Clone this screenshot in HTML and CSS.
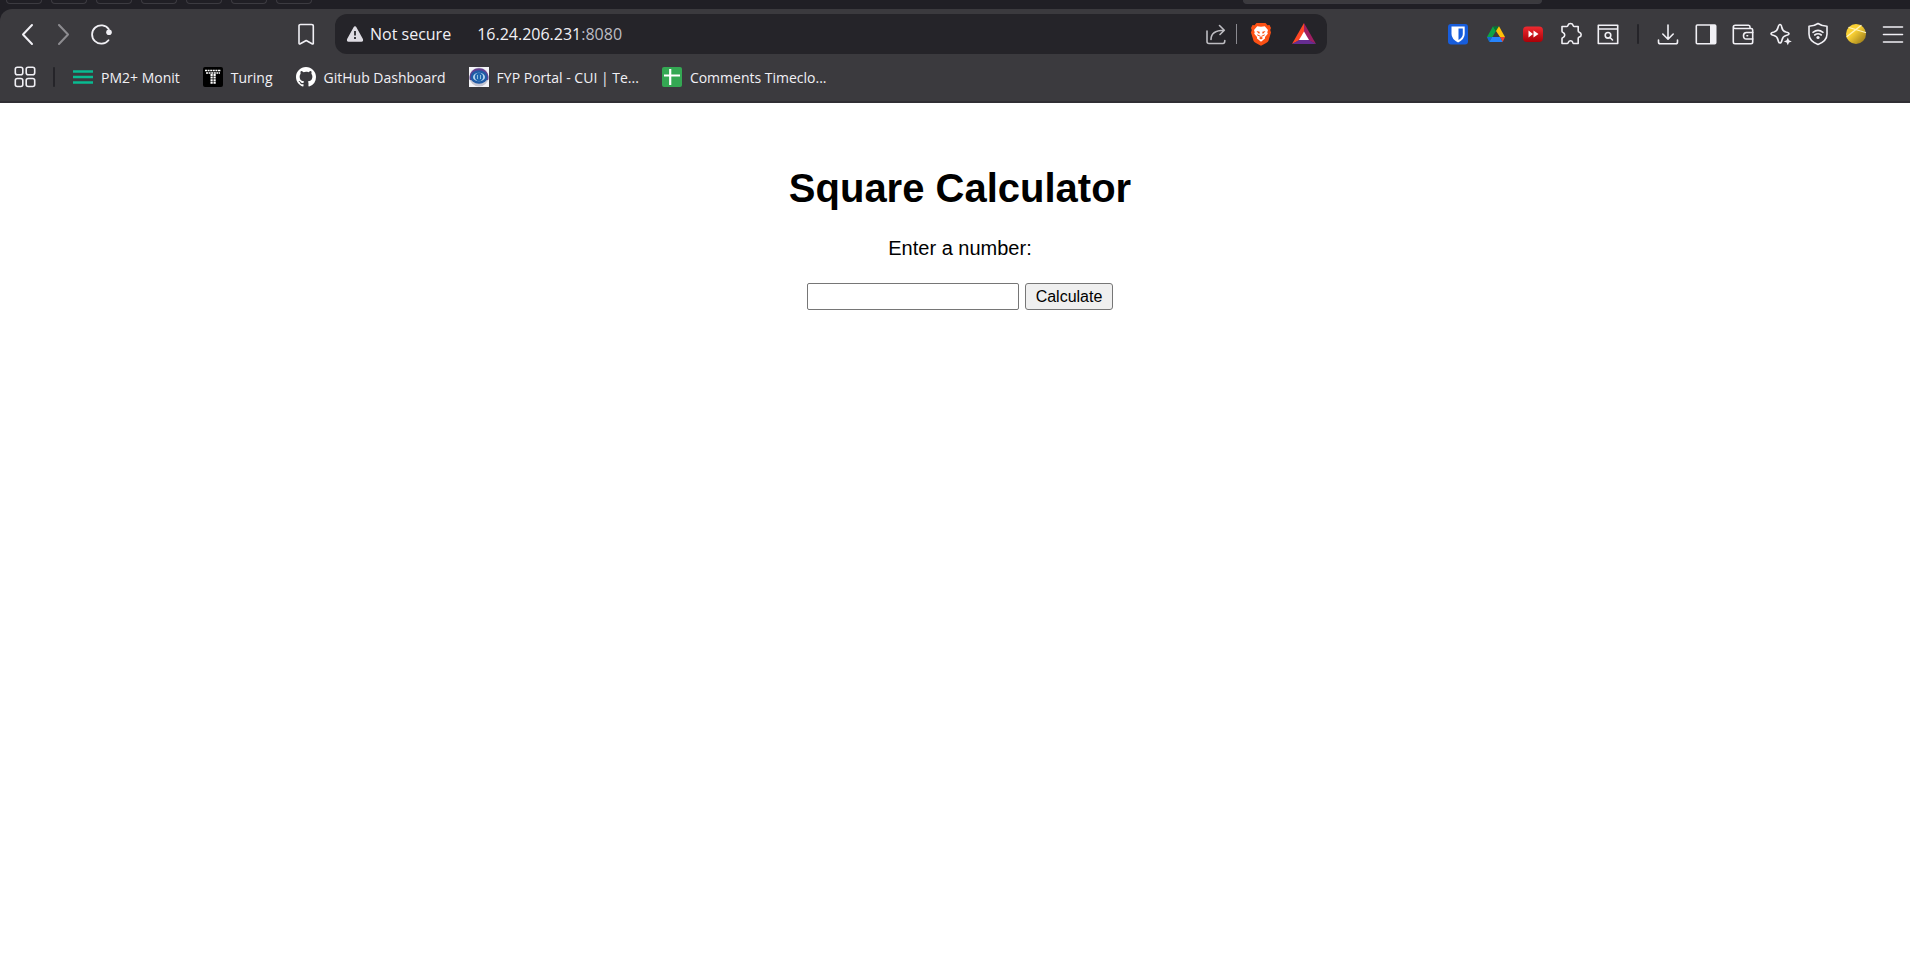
FILE: index.html
```html
<!DOCTYPE html>
<html lang="en">
<head>
<meta charset="utf-8">
<title>Square Calculator</title>
<link rel="stylesheet" href="styles.css">
</head>
<body>
<header class="browser">
  <div class="tabstrip">
    <span class="tab"></span><span class="tab"></span><span class="tab"></span><span class="tab"></span><span class="tab"></span><span class="tab"></span><span class="tab"></span>
    <span class="tab tab-active"></span>
  </div>
  <div class="chrome">
    <div class="toolbar">
      <div class="nav">
        <button class="icon-btn" aria-label="Back"><svg class="icon" viewBox="0 0 24 24"><path d="M17 3 8 12.500 17 22" stroke-width="2"/></svg></button>
        <button class="icon-btn dim" aria-label="Forward"><svg class="icon" viewBox="0 0 24 24"><path d="M7 3 16 12.500 7 22" stroke-width="2"/></svg></button>
        <button class="icon-btn" aria-label="Reload"><svg class="icon" viewBox="0 0 24 24"><path d="M19.500 18.200A9.200 9.200 0 1 1 19.800 7.200" stroke-width="1.800"/><circle cx="20" cy="10.300" r="2.800" class="solid"/></svg></button>
      </div>
      <button class="icon-btn" aria-label="Bookmark this page"><svg class="icon" viewBox="0 0 24 24"><path d="M5 3.500Q5 2.500 6.500 2.500H17.500Q19.300 2.500 19.300 4V21.500Q19 22.300 18 21.800L12.200 18.500 6.300 21.800Q5 22.300 5 21Z"/></svg></button>
      <div class="address">
        <button class="security"><svg class="warn" viewBox="0 0 18 18"><path d="M9 1.200Q9.900 1.200 10.400 2.200L16.900 14Q17.700 16.500 15.500 16.700H2.500Q.3 16.500 1.100 14L7.600 2.200Q8.100 1.200 9 1.200Z" fill="#dedce3"/><path d="M9 6v4.600M9 12v2" stroke="#29282d" stroke-width="1.800" stroke-linecap="butt"/></svg>Not secure</button>
        <span class="url">16.24.206.231<span class="port">:8080</span></span>
        <button class="icon-btn share" aria-label="Share"><svg class="icon" viewBox="0 0 24 24"><path d="M3 9v10.500Q3 21.500 5 21.500H19Q20.800 21.500 20.800 18.500M7 17.500C7 11.500 11 8.200 20 8.200M15.500 3.500 20.300 8.200 16 12.500"/></svg></button>
        <span class="address-rule"></span>
        <button class="icon-btn shields" aria-label="Brave Shields"><svg class="icon" viewBox="0 0 24 24"><path d="M7.500 1H16.500L18.500 3.200 20.500 3 22 6 21.200 8 22 10.500 19.400 19Q18.500 20.800 12 23.800 5.500 20.800 4.600 19L2 10.500 2.800 8 2 6 3.500 3 5.500 3.200Z" fill="#fb5014"/><path d="M12 4.800 15.800 4.300 19 8 18.300 10.300 18.800 11.800 16 15 16 16.500 12 19.700 8 16.500 8 15 5.200 11.800 5.700 10.300 5 8 8.200 4.300Z" fill="#fff"/><path d="M7.500 9 10.700 9.800 10.500 11.800 9.300 11.300ZM16.500 9 13.300 9.800 13.500 11.800 14.700 11.300ZM10 16 12 14.800 14 16 12 17.400Z" fill="#fb5014"/><path d="M8.600 13 11.200 14.200M15.400 13 12.800 14.200" stroke="#fb5014" stroke-width="1"/></svg></button>
        <button class="icon-btn rewards" aria-label="Brave Rewards"><svg class="icon" viewBox="0 0 24 24"><path d="M12 1 0 22 8 18 12 11Z" fill="#ff4724"/><path d="M12 1 24 22 16 18 12 11Z" fill="#9e1f63"/><path d="M0 22H24L16 17.500H8Z" fill="#662d91"/><path d="M12 9.500 17 18H7Z" fill="#fff"/></svg></button>
      </div>
      <div class="extensions">
        <button class="icon-btn" aria-label="Bitwarden"><svg class="icon" viewBox="0 0 24 24"><rect x="2" y="2" width="20" height="20.500" rx="3" fill="#175ddc"/><path d="M5.500 4.500H18.700V12Q18.700 17 12.100 20.500 5.500 17 5.500 12Z" fill="#fff"/><path d="M12.500 6.500H16.800V12Q16.700 15.500 12.500 18Z" fill="#175ddc"/></svg></button>
        <button class="icon-btn" aria-label="Google Drive"><svg class="icon" viewBox="0 0 24 24"><path d="M9 4.300 3 15 5.500 19.800 12 9Z" fill="#0da345"/><path d="M9 4.300H15L12 9.500Z" fill="#087334"/><path d="M15 4.300 21 15H16L12 9Z" fill="#ffc107"/><path d="M8 15 5.200 20H18.800L16 15Z" fill="#2684fc"/><path d="M3 15H8L5.200 20Z" fill="#1967d2"/><path d="M16 15H21L18.700 20Z" fill="#ea4335"/></svg></button>
        <button class="icon-btn" aria-label="Video speed"><svg class="icon" viewBox="0 0 24 24"><defs><linearGradient id="red" x2="0" y2="1"><stop stop-color="#ef2a30"/><stop offset="1" stop-color="#aa0007"/></linearGradient></defs><rect x="2" y="4.500" width="20" height="15.500" rx="4" fill="url(#red)"/><path d="M7.500 8.500 12 12 7.500 15.500ZM12.500 8.500 17.500 12 12.500 15.500Z" fill="#fff"/></svg></button>
        <button class="icon-btn" aria-label="Extensions"><svg class="icon" viewBox="0 0 24 24"><path d="M3 4.500H8C8.500 4.500 8.800 4 9 3.300 9.700.8 13.300.8 14 3.300 14.200 4 14.500 4.500 15 4.500H19.200V9C19.200 9.700 19.700 10 20.300 10.200 22.800 11 22.800 14.300 20.300 15.100 19.700 15.300 19.200 15.700 19.200 16.400V21.500H14.500C14 21.500 14 21 13.700 20.300 13 18.300 10.200 18.300 9.400 20.300 9.200 21 9 21.500 8.400 21.500H3V16.600C3 16 3.300 15.600 4 15.400 6.300 14.600 6.300 11.300 4 10.500 3.300 10.300 3 9.800 3 9.200Z"/></svg></button>
        <button class="icon-btn" aria-label="Search tabs"><svg class="icon" viewBox="0 0 24 24"><path d="M2.300 3.300H21.700V21.500H2.300ZM2.300 7H21.700"/><circle cx="12" cy="13.300" r="2.800"/><path d="m14 15.500 2.500 2.500"/></svg></button>
      </div>
      <span class="rule"></span>
      <div class="tools">
        <button class="icon-btn" aria-label="Downloads"><svg class="icon" viewBox="0 0 24 24"><path d="M12 3V17M6.800 12 12 17.200 17.200 12M2.500 18V20Q2.500 21.800 4.300 21.800H19.700Q21.500 21.800 21.500 20V18"/></svg></button>
        <button class="icon-btn" aria-label="Sidebar"><svg class="icon" viewBox="0 0 24 24"><rect x="2.300" y="3" width="19.400" height="18.800" rx="1"/><path d="M16 3H21.500V21.800H16Z" class="solid"/></svg></button>
        <button class="icon-btn" aria-label="Wallet"><svg class="icon" viewBox="0 0 24 24"><path d="M19 6V5Q19 3.300 17.500 3.300H4.300Q2.300 3.300 2.300 5V20Q2.300 21.700 4 21.700H20Q21.700 21.700 21.700 20V8Q21.700 6.500 20 6.500H4Q2.500 6.500 2.300 5"/><path d="M21.700 10.500H15.500Q12.500 10.500 12.500 13.800T15.500 17H21.700M16 13.800h.6"/></svg></button>
        <button class="icon-btn" aria-label="Leo AI"><svg class="icon" viewBox="0 0 24 24"><path d="M11 2.500Q12.400 2.500 12.800 5.500 13.400 9 17 10 20 10.600 20 11.800T17 13.500Q13.700 14.300 13 18 12.400 21 11 21T9 18Q8.300 14.300 5 13.500 2 12.800 2 11.800T5 10Q8.300 9 9 5.500 9.700 2.500 11 2.500Z"/><path d="M18.800 15.500 20 18.200 22.800 19.400 20 20.600 18.800 23.300 17.600 20.600 14.800 19.400 17.600 18.200Z" class="solid"/></svg></button>
        <button class="icon-btn" aria-label="VPN"><svg class="icon" viewBox="0 0 24 24"><path d="M12 1.500Q16 4.200 21 4.200V12Q21 19 12 22.500 3 19 3 12V4.200Q8 4.200 12 1.500Z"/><path d="M7 10.300Q12 6.500 17 10.300M8.700 13Q12 10.500 15.300 13"/><circle cx="12" cy="15.500" r="1.600" class="solid"/></svg></button>
        <button class="icon-btn" aria-label="Profile"><svg class="icon" viewBox="0 0 24 24"><defs><linearGradient id="gold" x2="1" y2="1"><stop offset=".4" stop-color="#fad134"/><stop offset="1" stop-color="#8c6f16"/></linearGradient></defs><circle cx="12" cy="12" r="10" fill="url(#gold)"/><path class="lines" d="M5 5.500 21.500 10.500M17 3.500 3 14.500"/></svg></button>
        <button class="icon-btn" aria-label="Menu"><svg class="icon" viewBox="0 0 24 24"><path d="M2.500 5H21.500M2.500 12.500H21.500M2.500 20H21.500"/></svg></button>
      </div>
    </div>
    <nav class="bookmarks">
      <button class="icon-btn" aria-label="All bookmarks"><svg class="icon" viewBox="0 0 24 24"><rect x="2.300" y="2.300" width="7.500" height="7.500" rx="2"/><rect x="13.200" y="2.300" width="8.500" height="7.500" rx="2"/><rect x="2.300" y="13.500" width="7.500" height="8" rx="2"/><rect x="13.200" y="13.500" width="8.500" height="8" rx="2"/></svg></button>
      <span class="rule"></span>
      <a class="bookmark" href="#"><svg class="favicon" viewBox="0 0 20 20"><path d="M0 4.500H20M0 10H20M0 15.500H20" stroke="#09bb91" stroke-width="2.500"/></svg>PM2+ Monit</a>
      <a class="bookmark" href="#"><svg class="favicon" viewBox="0 0 20 20"><rect width="20" height="20" rx="2" fill="#000"/><path d="M2 3.500H18M3 6H17" stroke="#fff" stroke-width="1.600" stroke-dasharray="2 .6"/><path d="M8.600 7V17M11.600 7V17" stroke="#fff" stroke-width="2.200" stroke-dasharray="2 .6"/></svg>Turing</a>
      <a class="bookmark" href="#"><svg class="favicon" viewBox="0 0 16 16"><path fill="#fff" d="M8 0C3.580 0 0 3.580 0 8c0 3.540 2.290 6.530 5.470 7.590.4.070.55-.17.55-.38 0-.19-.01-.82-.01-1.490-2.010.37-2.530-.49-2.690-.94-.09-.23-.48-.94-.82-1.130-.28-.15-.68-.52-.01-.53.63-.01 1.080.58 1.230.82.72 1.210 1.870.87 2.330.66.07-.52.28-.87.51-1.070-1.780-.2-3.640-.89-3.640-3.950 0-.87.31-1.590.82-2.150-.08-.2-.36-1.020.08-2.120 0 0 .67-.21 2.200.82A7.600 7.600 0 0 1 8 3.860c.68 0 1.360.09 2 .27 1.530-1.040 2.200-.82 2.200-.82.44 1.100.16 1.920.08 2.120.51.56.82 1.270.82 2.150 0 3.070-1.870 3.750-3.650 3.950.29.25.54.73.54 1.480 0 1.070-.01 1.930-.01 2.200 0 .21.15.46.55.38A8.010 8.010 0 0 0 16 8c0-4.420-3.580-8-8-8Z"/></svg>GitHub Dashboard</a>
      <a class="bookmark" href="#"><svg class="favicon" viewBox="0 0 20 20"><rect width="20" height="20" fill="#f4f4f8"/><circle cx="10" cy="10" r="9.500" fill="#c5c5d2"/><path d="M.8 13A9.500 9.500 0 1 1 19.200 13Z" fill="#633f91"/><ellipse cx="10" cy="10" rx="8.500" ry="6.800" fill="#205ba5"/><ellipse cx="10" cy="10" rx="6" ry="4.300" fill="#b9d7ef"/><circle cx="10" cy="10" r="4.200" fill="#2166ae"/><path d="M8.500 8v4M11.500 8v4" stroke="#91bddd" stroke-width="1"/></svg>FYP Portal - CUI | Te...</a>
      <a class="bookmark" href="#"><svg class="favicon" viewBox="0 0 20 20"><rect width="20" height="20" rx="2" fill="#34a853"/><path d="M2 8.500H18M8.200 2V18" stroke="#fff" stroke-width="2.200"/></svg>Comments Timeclo...</a>
    </nav>
  </div>
</header>
<main class="page">
  <h1>Square Calculator</h1>
  <form class="calculator">
    <label for="number">Enter a number:</label>
    <div class="fields">
      <input id="number" type="text" name="number">
      <button type="button" class="calculate">Calculate</button>
    </div>
  </form>
</main>
</body>
</html>
```
FILE: styles.css
```css
* { box-sizing: border-box; }
body { margin: 0; background: #fff; color: #000; font-family: "Liberation Sans", Arial, sans-serif; }

.browser { background: #201f25; font-family: "Open Sans", "Noto Sans", sans-serif; color: #f1f0f5; }
.browser button { padding: 0; border: 0; background: none; color: inherit; font: inherit; }
.tabstrip { display: flex; gap: 9px; height: 9px; padding-left: 6px; padding-right: 368px; }
.tab { width: 36px; height: 4px; border: 1px solid #3c3b41; border-top: 0; border-radius: 0 0 8px 8px; }
.tab-active { width: 299px; margin-left: auto; background: #3b3a3e; }

.chrome { background: #3b3a3e; border-radius: 12px 0 0; border-bottom: 2px solid #302f34; }
.toolbar { display: flex; align-items: center; height: 50px; padding: 0 5px 0 15px; }
.nav { display: flex; gap: 13px; margin-right: 181px; }
.icon-btn { display: flex; flex: none; width: 24px; height: 24px; }
.dim { opacity: .45; }
.icon { width: 24px; height: 24px; fill: none; stroke: #f1f0f5; stroke-width: 1.6px; stroke-linecap: round; stroke-linejoin: round; }
.icon [stroke-width="2"] { stroke-width: 2px; }
.icon [fill] { stroke: none; }
.icon .solid { fill: #f1f0f5; stroke: none; }
.icon .lines { stroke: #fff4b8; stroke-width: 1.3px; }

.address { display: flex; align-items: center; flex: 1; height: 40px; margin: 0 119px 0 17px; padding: 0 11px; border-radius: 12px; background: #252429; font-size: 16px; }
.browser .security { display: flex; align-items: center; gap: 6px; }
.warn { width: 18px; height: 18px; }
.url { margin-left: 26px; }
.port { color: #bdbcc3; }
.share { margin-left: auto; opacity: .75; }
.address-rule { width: 1px; height: 20px; margin: 0 12px 0 8px; background: #8b8a90; }
.rewards { margin-left: 19px; }

.rule { flex: none; width: 2px; height: 20px; border-radius: 1px; background: #252429; }
.extensions, .tools { display: flex; justify-content: space-between; }
.extensions { width: 174px; margin-right: 17px; }
.tools { width: 249px; margin-left: 17px; }

.bookmarks { display: flex; align-items: center; height: 42px; padding-left: 13px; padding-bottom: 6px; font-size: 14px; }
.bookmarks .rule { margin: 0 18px 0 16px; }
.bookmark { display: flex; align-items: center; gap: 8px; margin-right: 23px; color: inherit; text-decoration: none; white-space: nowrap; }
.favicon { width: 20px; height: 20px; fill: none; }

.page { padding: 62px 0 50px 10px; text-align: center; font-size: 20px; }
.page h1 { margin: 0; font-size: 40px; line-height: 46px; }
.calculator { margin-top: 26px; }
.calculator label { display: block; line-height: 23px; }
.fields { display: flex; justify-content: center; gap: 6px; margin-top: 23px; }
.fields input { width: 212px; height: 27px; padding: 1px 2px; border: 1px solid #767676; border-radius: 2px; background: #fff; font: 16px "Liberation Sans", Arial, sans-serif; }
.calculate { height: 27px; padding: 0 10px; border: 1px solid #767676; border-radius: 3px; background: #efefef; color: #000; font: 16px "Liberation Sans", Arial, sans-serif; }
```
